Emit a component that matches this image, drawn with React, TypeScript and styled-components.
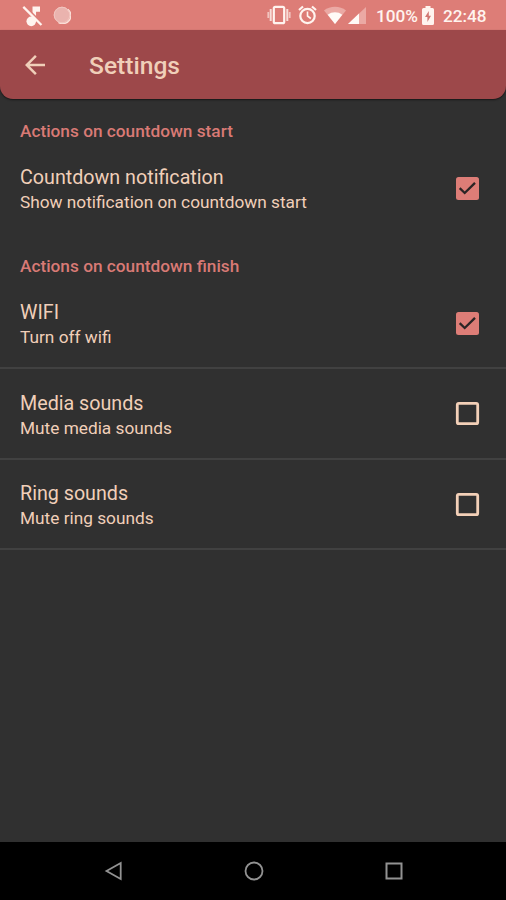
import React from "react";
import styled, { createGlobalStyle } from "styled-components";

const GlobalStyle = createGlobalStyle`
  * { box-sizing: border-box; }
  body { margin: 0; background: #303030; }
`;

const Screen = styled.div`
  display: flex;
  flex-direction: column;
  width: 506px;
  height: 900px;
  overflow: hidden;
  background: #303030;
  color: #f0cfb9;
  font-family: Roboto, sans-serif;
`;

const StatusBar = styled.div`
  display: flex;
  align-items: center;
  justify-content: space-between;
  height: 30px;
  flex: none;
  padding: 0 19px 0 20px;
  background: #dd7d77;
  color: #fff4ef;
`;

const StatusGroup = styled.div`
  display: flex;
  align-items: center;
  height: 30px;
`;

const StatusText = styled.span<{ $width: number }>`
  width: ${(p) => p.$width}px;
  font-size: 17.2px;
  font-weight: 500;
  line-height: 30px;
  padding-top: 1px;
  white-space: nowrap;
`;

const Glyph = styled.svg<{ $w: number; $h: number; $gap?: number }>`
  display: block;
  flex: none;
  width: ${(p) => p.$w}px;
  height: ${(p) => p.$h}px;
  margin-right: ${(p) => p.$gap ?? 0}px;
`;

const AppBar = styled.header`
  display: flex;
  align-items: center;
  height: 69px;
  flex: none;
  padding: 0 20px;
  border-radius: 0 0 13px 13px;
  background: #9d484a;
  box-shadow: 0 1px 2px rgba(0, 0, 0, 0.55);
`;

const BackButton = styled.button`
  display: flex;
  width: 69px;
  padding: 0;
  border: 0;
  background: none;
  color: inherit;
`;

const Title = styled.h1`
  margin: 2px 0 0;
  font-size: 24.6px;
  line-height: 30px;
  font-weight: 500;
`;

const Content = styled.main`
  flex: 1;
`;

const Category = styled.h2`
  display: flex;
  align-items: flex-end;
  height: 44.6px;
  margin: 0;
  padding: 0 20px 3px;
  color: #d97a75;
  font-size: 17.25px;
  line-height: 20px;
  font-weight: 500;
`;

const Row = styled.label<{ $divider?: boolean }>`
  display: flex;
  align-items: center;
  justify-content: space-between;
  height: 90.5px;
  padding: ${(p) => (p.$divider ? "1px" : "0")} 26px 0 20px;
  border-bottom: ${(p) => (p.$divider ? "2px solid #414141" : "0")};
`;

const RowText = styled.div<{ $lowered?: boolean }>`
  display: flex;
  flex-direction: column;
  gap: 3px;
  padding-top: ${(p) => (p.$lowered ? "2px" : "0")};
`;

const RowTitle = styled.span`
  font-size: 19.7px;
  line-height: 23px;
`;

const RowSummary = styled.span`
  font-size: 17.25px;
  line-height: 20px;
`;

const NavBar = styled.nav`
  display: flex;
  align-items: center;
  justify-content: space-between;
  height: 58px;
  flex: none;
  padding: 0 102px 0 104px;
  background: #000;
`;

const Checkbox = ({ checked }: { checked: boolean }) => (
  <Glyph $w={25} $h={25} viewBox="0 0 25 25">
    {checked ? (
      <>
        <rect x="1" y="1" width="23" height="23" rx="2.5" fill="#dd7d77" />
        <path d="M4.7 12.2l5 4.8L20 6.9" fill="none" stroke="#2b2525" strokeWidth="2.3" />
      </>
    ) : (
      <rect x="2.3" y="2.3" width="20.4" height="20.4" rx="1.5" fill="none" stroke="#f3d0b8" strokeWidth="2.8" />
    )}
  </Glyph>
);

type Setting = { title: string; summary: string; checked: boolean; divider?: boolean };

const SettingRow = ({ title, summary, checked, divider }: Setting) => (
  <Row $divider={divider}>
    <RowText $lowered={divider}>
      <RowTitle>{title}</RowTitle>
      <RowSummary>{summary}</RowSummary>
    </RowText>
    <Checkbox checked={checked} />
  </Row>
);

const sections: { name: string; items: Setting[] }[] = [
  {
    name: "Actions on countdown start",
    items: [
      { title: "Countdown notification", summary: "Show notification on countdown start", checked: true },
    ],
  },
  {
    name: "Actions on countdown finish",
    items: [
      { title: "WIFI", summary: "Turn off wifi", checked: true, divider: true },
      { title: "Media sounds", summary: "Mute media sounds", checked: false, divider: true },
      { title: "Ring sounds", summary: "Mute ring sounds", checked: false, divider: true },
    ],
  },
];

export default function App() {
  return (
    <Screen>
      <GlobalStyle />
      <StatusBar>
        <StatusGroup>
          <Glyph $w={25} $h={25} $gap={8} viewBox="0 0 24 24" fill="currentColor">
            <path d="M12 3.300h7.200v5.200h-3.800v6l-3.400-4z" />
            <circle cx="10.8" cy="17.6" r="4.6" />
            <path d="M11.500 11.500l3.900 3.900v2.300h-3.900z" />
            <path d="M4.600 2.800L21.600 19.800" stroke="#dd7d77" strokeWidth="1.6" />
            <path d="M3.200 3.700L20.600 21.100" stroke="currentColor" strokeWidth="2.2" />
          </Glyph>
          <Glyph $w={18} $h={18} viewBox="0 0 18 18">
            <circle cx="9" cy="9" r="8.3" fill="#eab3ae" />
            <path d="M14.800 3.300a8 8 0 0 1-9.300 13" fill="none" stroke="#fbe0d8" strokeWidth="1.5" />
            <circle cx="9" cy="9" r="7.8" fill="none" stroke="#f2c6c0" strokeWidth="1" />
          </Glyph>
        </StatusGroup>
        <StatusGroup>
          <Glyph $w={24} $h={20} $gap={7} viewBox="0 0 24 20" fill="none" stroke="currentColor">
            <rect x="6.8" y="1.8" width="10.4" height="16.4" rx="1.5" strokeWidth="2.2" />
            <path d="M3.700 4v12M20.300 4v12" strokeWidth="2" opacity="0.8" />
            <path d="M1.300 7v6M22.700 7v6" strokeWidth="1.8" opacity="0.6" />
          </Glyph>
          <Glyph $w={19} $h={20} $gap={7} viewBox="0 0 19 20" fill="none" stroke="currentColor">
            <circle cx="9.500" cy="11" r="7.2" strokeWidth="2.2" />
            <path d="M9.500 6.500V11l3.300 2.500" strokeWidth="1.6" />
            <path d="M1 5l4-3.500M18 5l-4-3.500" strokeWidth="2.2" />
          </Glyph>
          <Glyph $w={22} $h={18} $gap={2} viewBox="0 0 22 18">
            <path d="M0 4.500C6-.5 16-.5 22 4.500L11 18z" fill="#eba9a4" />
            <path d="M3.700 8.800c4.300-3.300 10.300-3.300 14.600 0L11 18z" fill="#fffaf7" />
          </Glyph>
          <Glyph $w={18} $h={17} $gap={10} viewBox="0 0 18 17">
            <path d="M18 0v17H0z" fill="#eba9a4" />
            <path d="M11 6.600V17H0z" fill="#fffaf7" />
          </Glyph>
          <StatusText $width={46}>100%</StatusText>
          <Glyph $w={12} $h={19} $gap={9} viewBox="0 0 12 19">
            <path d="M3.500 0h5v2H10.500Q12 2 12 3.500v14q0 1.500-1.500 1.500h-9Q0 19 0 17.500v-14Q0 2 1.500 2h2z" fill="#fff4ef" />
            <path d="M6.800 5L3 11h2.400v5L9 9.800H6.800z" fill="#d17772" />
          </Glyph>
          <StatusText $width={44}>22:48</StatusText>
        </StatusGroup>
      </StatusBar>
      <AppBar>
        <BackButton aria-label="Back">
          <Glyph $w={30} $h={30} viewBox="0 0 24 24" fill="currentColor">
            <path d="M20 11H7.830l5.590-5.590L12 4l-8 8 8 8 1.410-1.410L7.830 13H20v-2z" />
          </Glyph>
        </BackButton>
        <Title>Settings</Title>
      </AppBar>
      <Content>
        {sections.map((section) => (
          <section key={section.name}>
            <Category>{section.name}</Category>
            {section.items.map((item) => (
              <SettingRow key={item.title} {...item} />
            ))}
          </section>
        ))}
      </Content>
      <NavBar>
        <Glyph $w={19} $h={20} viewBox="0 0 19 20" fill="none" stroke="#929292" strokeWidth="1.8">
          <path d="M2.500 10L16.700 2v16z" />
        </Glyph>
        <Glyph $w={20} $h={20} viewBox="0 0 20 20" fill="none" stroke="#929292" strokeWidth="1.8">
          <circle cx="10" cy="10" r="8.5" />
        </Glyph>
        <Glyph $w={20} $h={20} viewBox="0 0 20 20" fill="none" stroke="#929292" strokeWidth="2">
          <rect x="2.5" y="2.5" width="15" height="15" />
        </Glyph>
      </NavBar>
    </Screen>
  );
}
